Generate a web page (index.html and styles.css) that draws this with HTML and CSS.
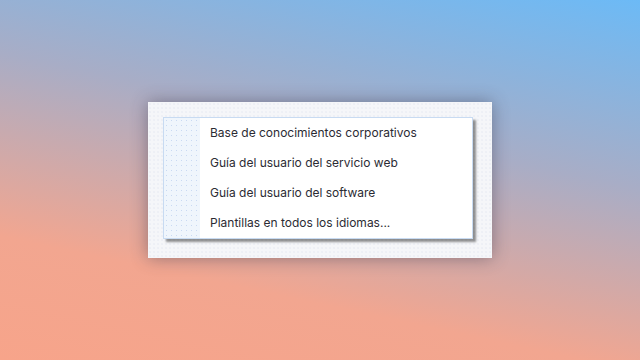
FILE: index.html
```html
<!DOCTYPE html>
<html lang="es">
<head>
    <meta charset="UTF-8">
    <meta name="viewport" content="width=device-width, initial-scale=1.0">
    <title>Menú</title>
    <link rel="stylesheet" href="styles.css">
</head>
<body>
    <div class="panel">
        <div class="menu">
            <div class="menu-gutter"></div>
            <ul class="menu-items">
                <li>Base de conocimientos corporativos</li>
                <li>Guía del usuario del servicio web</li>
                <li>Guía del usuario del software</li>
                <li>Plantillas en todos los idiomas...</li>
            </ul>
        </div>
    </div>
</body>
</html>
```

FILE: styles.css
```css
html, body {
    height: 100%;
}

body {
    margin: 0;
    font-family: Inter, "Noto Sans", sans-serif;
    background: linear-gradient(192deg, #6cbaf6 0%, #a8adc6 38%, #f2a690 75%, #f7a48a 100%);
    display: flex;
    align-items: center;
    justify-content: center;
}

.panel {
    width: 310px;
    padding: 15px 19px 19px 15px;
    background-color: #f5f6f9;
    background-image: radial-gradient(circle, #e4e8f0 0.6px, transparent 0.8px);
    background-size: 4px 4px;
    box-shadow: 0 0 16px rgba(50, 50, 70, 0.45);
}

.menu {
    display: flex;
    background: #fff;
    border: 1px solid #c8dbf2;
    box-shadow: 3px 3px 2px rgba(60, 60, 60, 0.55);
}

.menu-gutter {
    width: 36px;
    background-color: #eff5fc;
    background-image: radial-gradient(circle, #c9d9f2 0.7px, transparent 0.9px);
    background-size: 5px 5px;
}

.menu-items {
    list-style: none;
    margin: 0;
    padding: 0;
    flex: 1;
}

.menu-items li {
    height: 30px;
    line-height: 30px;
    padding-left: 10px;
    font-size: 12px;
    color: #2b2b33;
}
```
